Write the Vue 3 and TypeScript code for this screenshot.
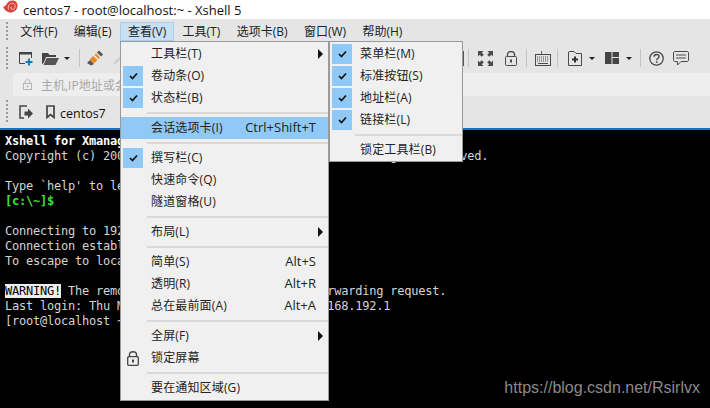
<script setup lang="ts">
interface Item {
  label?: string
  key?: string
  checked?: boolean
  active?: boolean
  arrow?: boolean
  lock?: boolean
  sep?: boolean
}

const menus: string[] = ['文件(F)', '编辑(E)', '查看(V)', '工具(T)', '选项卡(B)', '窗口(W)', '帮助(H)']

const viewItems: Item[] = [
  { label: '工具栏(T)', arrow: true },
  { label: '卷动条(O)', checked: true },
  { label: '状态栏(B)', checked: true },
  { sep: true },
  { label: '会话选项卡(I)', key: 'Ctrl+Shift+T', active: true },
  { sep: true },
  { label: '撰写栏(C)', checked: true },
  { label: '快速命令(Q)' },
  { label: '隧道窗格(U)' },
  { sep: true },
  { label: '布局(L)', arrow: true },
  { sep: true },
  { label: '简单(S)', key: 'Alt+S' },
  { label: '透明(R)', key: 'Alt+R' },
  { label: '总在最前面(A)', key: 'Alt+A' },
  { sep: true },
  { label: '全屏(F)', arrow: true },
  { label: '锁定屏幕', lock: true },
  { sep: true },
  { label: '要在通知区域(G)' }
]

const toolbarItems: Item[] = [
  { label: '菜单栏(M)', checked: true },
  { label: '标准按钮(S)', checked: true },
  { label: '地址栏(A)', checked: true },
  { label: '链接栏(L)', checked: true },
  { sep: true },
  { label: '锁定工具栏(B)' }
]
</script>

<template>
  <div class="window">
    <header class="titlebar">
      <svg class="logo" width="15" height="13" viewBox="0 0 15 13">
        <path d="M0 6.500C2 7 3 5 4 3.500 5.500 1 8 0 10.500 .5 13.500 1.200 15 3.500 14.500 6.500 14 10 11 12.500 7.500 12.500 4 12.500 1.500 10 0 6.500Z" fill="#d8443c" />
        <path d="M5.500 9.500C4.500 6 6.500 3 9.500 3.300S13 7 11 8.800 7.500 8.800 8 6.500" fill="none" stroke="#f6c4bd" stroke-width="1" />
      </svg>
      <span>centos7 - root@localhost:~ - Xshell 5</span>
    </header>

    <nav class="menubar">
      <i class="grip"></i>
      <span v-for="(m, i) in menus" :key="m" class="menu-title" :class="{ open: i === 2 }">{{ m }}</span>
    </nav>

    <div class="toolbar">
      <i class="grip"></i>
      <svg class="tb-new" width="15" height="15" viewBox="0 0 15 15">
        <path d="M7 12.500H1.500V1.500H13.500V7" fill="none" stroke="#444" stroke-width="1" />
        <rect x="1" y="1" width="13" height="2.500" fill="#444" />
        <path d="M11 7.500V14.500M7.500 11H14.500" stroke="#1a7ab8" stroke-width="2" />
      </svg>
      <svg class="tb-open" width="17" height="13" viewBox="0 0 17 13">
        <path d="M0 1H6L7.500 3H14V5H4L1.500 11L0 12Z" fill="#444" />
        <path d="M4.500 6H17L13.500 13H1.500Z" fill="#555" />
      </svg>
      <i class="caret tb-caret1"></i>
      <i class="tb-sep tb-sep1"></i>
      <svg class="tb-plug" width="18" height="16" viewBox="0 0 18 16">
        <path d="M1 13L4 10L8 14L5 15.500Z" fill="#555" />
        <path d="M3.500 9.500L10 3.500L14 7.500L8 13.500Z" fill="#e88a28" />
        <path d="M8 5.500L12 9.500" stroke="#fff" stroke-width="1.500" />
        <path d="M11 2.500L13 0.500L17 4.500L15 6.500Z" fill="#555" />
      </svg>
      <svg class="tb-plug2" width="14" height="14" viewBox="0 0 14 14">
        <path d="M1 12L10 3.500L12 5.500L3 13.500Z" fill="#cfcfcf" />
        <path d="M9.500 2L11.500 0.500L13.500 3L12 4.500Z" fill="#c4c4c4" />
      </svg>
      <span class="tb-spacer"></span>
      <i class="tb-hidden"></i>
      <i class="tb-sep"></i>
      <svg class="tb-full" width="15" height="15" viewBox="0 0 15 15" fill="#4a4a4a">
        <path d="M0 0H5.500L3.800 1.700 5.800 3.700 3.700 5.800 1.700 3.800 0 5.500Z" />
        <path d="M15 0V5.500L13.300 3.800 11.300 5.800 9.200 3.700 11.200 1.700 9.500 0Z" />
        <path d="M0 15V9.500L1.700 11.200 3.700 9.200 5.800 11.300 3.800 13.300 5.500 15Z" />
        <path d="M15 15H9.500L11.200 13.300 9.200 11.300 11.300 9.200 13.300 11.200 15 9.500Z" />
      </svg>
      <svg class="tb-lock" width="12" height="15" viewBox="0 0 12 15">
        <path d="M2.500 6V3.500C2.500 1.500 4 .5 6 .5S9.500 1.500 9.500 3.500V6" fill="none" stroke="#4a4a4a" stroke-width="1.300" />
        <rect x=".5" y="5.500" width="11" height="9" rx="1" fill="none" stroke="#4a4a4a" />
        <rect x="5" y="8.500" width="2" height="3" fill="#4a4a4a" />
      </svg>
      <i class="tb-sep tb-sep-l"></i>
      <svg class="tb-kbd" width="16" height="16" viewBox="0 0 16 16">
        <path d="M6.500 1V4" stroke="#666" />
        <rect x=".5" y="4.500" width="15" height="11" fill="none" stroke="#4a4a4a" />
        <path d="M2 7H14M2 9H14M2 11H14" stroke="#4a4a4a" stroke-dasharray="1 1" />
        <path d="M3 13.500H13" stroke="#4a4a4a" />
      </svg>
      <i class="tb-sep tb-sep-k"></i>
      <svg class="tb-add" width="14" height="15" viewBox="0 0 14 15">
        <path d="M1 .5H6L8 2.500H13.500V14.500H.5V1Z" fill="none" stroke="#4a4a4a" />
        <path d="M7 5.500V11.500M4 8.500H10" stroke="#333" stroke-width="2" />
      </svg>
      <i class="caret tb-caret2"></i>
      <svg class="tb-layout" width="14" height="12" viewBox="0 0 14 12" fill="#444">
        <rect width="6.500" height="12" />
        <rect x="7.500" width="6.500" height="5" />
        <rect x="7.500" y="6" width="6.500" height="6" />
      </svg>
      <i class="caret tb-caret3"></i>
      <i class="tb-sep tb-sep-c"></i>
      <svg class="tb-help" width="15" height="15" viewBox="0 0 15 15">
        <circle cx="7.500" cy="7.500" r="6.700" fill="none" stroke="#4a4a4a" stroke-width="1.300" />
        <path d="M5 5.800C5 4.200 6.200 3.500 7.500 3.500S10 4.300 10 5.700 7.700 7.500 7.700 9.300" fill="none" stroke="#4a4a4a" stroke-width="1.500" />
        <rect x="6.900" y="10.300" width="1.600" height="1.600" fill="#4a4a4a" />
      </svg>
      <svg class="tb-chat" width="16" height="15" viewBox="0 0 16 15">
        <path d="M2 .5H14C15 .5 15.500 1 15.500 2V9C15.500 10 15 10.500 14 10.500H8L4.500 14V10.500H2C1 10.500 .5 10 .5 9V2C.5 1 1 .5 2 .5Z" fill="none" stroke="#4a4a4a" />
        <path d="M3 4H13M3 7H13" stroke="#4a4a4a" />
      </svg>
    </div>

    <div class="addressbar">
      <div class="address-field">
        <svg width="9" height="11" viewBox="0 0 9 11">
          <path d="M2 4.500V3C2 1.500 3 .7 4.500 .7S7 1.500 7 3V4.500" fill="none" stroke="#b5b5b5" />
          <rect x=".5" y="4.500" width="8" height="6" fill="none" stroke="#b5b5b5" />
          <rect x="3.700" y="6.500" width="1.600" height="2" fill="#b5b5b5" />
        </svg>
        <span>主机,IP地址或会话名称</span>
      </div>
    </div>

    <div class="tabbar">
      <i class="grip"></i>
      <svg class="tab-link" width="14" height="14" viewBox="0 0 14 14">
        <path d="M8 1H1V13H5" fill="none" stroke="#444" stroke-width="1.500" />
        <path d="M5.500 6.500H9V3.500L14 8.500L9 13.500V10.500H5.500Z" fill="#444" />
      </svg>
      <svg class="tab-mark" width="9" height="14" viewBox="0 0 9 14">
        <path d="M1 1H8V12.500L4.500 9.500L1 12.500Z" fill="none" stroke="#444" stroke-width="1.700" />
      </svg>
      <span>centos7</span>
    </div>

    <main class="terminal">
      <div class="strong">Xshell for Xmanager Enterprise 5</div>
      <div>Copyright (c) 2002-2016 NetSarang Computer, Inc. All rights reserved.</div>
      <div>&nbsp;</div>
      <div>Type `help' to learn how to use Xshell prompt.</div>
      <div class="green">[c:\~]$</div>
      <div>&nbsp;</div>
      <div>Connecting to 192.168.192.128:22...</div>
      <div>Connection established.</div>
      <div>To escape to local shell, press 'Ctrl+Alt+]'.</div>
      <div>&nbsp;</div>
      <div><span class="inverse">WARNING!</span> The remote SSH server rejected X11 forwarding request.</div>
      <div>Last login: Thu Mar 14 10:12:55 2019 from 192.168.192.1</div>
      <div>[root@localhost ~]#</div>
      <span class="watermark">https://blog.csdn.net/Rsirlvx</span>
    </main>

    <ul class="menu view-menu">
      <template v-for="(it, i) in viewItems" :key="i">
        <li v-if="it.sep" class="sep"></li>
        <li v-else class="row" :class="{ active: it.active }">
          <span class="gutter">
            <span v-if="it.checked" class="check">
              <svg width="9" height="8" viewBox="0 0 9 8"><path d="M1 4L3.500 6.500L8 1.500" fill="none" stroke="#111" stroke-width="1.700" /></svg>
            </span>
            <svg v-if="it.lock" width="12" height="15" viewBox="0 0 12 15">
              <path d="M2.500 6V3.500C2.500 1.500 4 .7 6 .7S9.500 1.500 9.500 3.500V6" fill="none" stroke="#444" stroke-width="1.400" />
              <rect x=".7" y="5.700" width="10.600" height="8.600" rx="1" fill="none" stroke="#444" stroke-width="1.300" />
              <rect x="5" y="8.500" width="2" height="3" fill="#444" />
            </svg>
          </span>
          <span class="label">{{ it.label }}</span>
          <span v-if="it.key" class="shortcut">{{ it.key }}</span>
          <i v-if="it.arrow" class="arrow"></i>
        </li>
      </template>
    </ul>

    <ul class="menu sub-menu">
      <template v-for="(it, i) in toolbarItems" :key="i">
        <li v-if="it.sep" class="sep"></li>
        <li v-else class="row">
          <span class="gutter">
            <span v-if="it.checked" class="check">
              <svg width="9" height="8" viewBox="0 0 9 8"><path d="M1 4L3.500 6.500L8 1.500" fill="none" stroke="#111" stroke-width="1.700" /></svg>
            </span>
          </span>
          <span class="label">{{ it.label }}</span>
        </li>
      </template>
    </ul>
  </div>
</template>

<style>
html, body { margin: 0; background: #000; }
</style>

<style scoped>
.window {
  position: relative;
  width: 710px;
  height: 408px;
  overflow: hidden;
  display: flex;
  flex-direction: column;
  background: #e5e5e5;
  font: 12px "Open Sans", "Noto Sans CJK SC", sans-serif;
  color: #222;
}
.titlebar {
  height: 19px;
  flex: none;
  background: #fff;
  display: flex;
  align-items: center;
  padding-left: 3px;
  gap: 5px;
  font-size: 13px;
  color: #111;
}
.logo { flex: none; align-self: flex-start; }
.grip {
  flex: none;
  width: 2px;
  margin-left: 6px;
  background: repeating-linear-gradient(to bottom, #999 0 2px, transparent 2px 4px);
}
.menubar {
  height: 24px;
  flex: none;
  display: flex;
  align-items: center;
  font-size: 12px;
}
.menubar .grip { height: 18px; margin-right: 4px; }
.menu-title {
  height: 19px;
  line-height: 19px;
  padding: 0 8.200px;
  white-space: nowrap;
  box-sizing: border-box;
}
.menu-title.open {
  background: #c9e0f4;
  box-shadow: inset 0 0 0 1px #a9cdea;
}
.toolbar {
  height: 30px;
  flex: none;
  display: flex;
  align-items: center;
}
.toolbar .grip { height: 22px; }
.toolbar svg, .toolbar i { flex: none; }
.tb-new { margin-left: 10px; }
.tb-open { margin-left: 9px; }
.caret {
  width: 0;
  height: 0;
  border-left: 3px solid transparent;
  border-right: 3px solid transparent;
  border-top: 3px solid #222;
}
.tb-caret1 { margin-left: 5px; }
.tb-sep {
  width: 1px;
  height: 18px;
  background: #c4c4c4;
}
.tb-sep1 { margin-left: 9px; }
.tb-plug { margin-left: 6px; }
.tb-plug2 { margin-left: 8px; }
.tb-spacer { flex: 1; }
.tb-hidden {
  width: 3px;
  height: 15px;
  margin-right: 4px;
  background: #555;
}
.tb-full { margin-left: 9px; }
.tb-lock { margin-left: 12px; }
.tb-sep-l { margin-left: 9px; }
.tb-kbd { margin-left: 8px; }
.tb-sep-k { margin-left: 6px; }
.tb-add { margin-left: 10px; }
.tb-caret2 { margin-left: 7px; }
.tb-layout { margin-left: 10px; }
.tb-caret3 { margin-left: 7px; }
.tb-sep-c { margin-left: 8px; }
.tb-help { margin-left: 8px; }
.tb-chat { margin-left: 9px; margin-right: 21px; }
.addressbar {
  height: 23px;
  flex: none;
  padding-left: 13px;
  display: flex;
}
.address-field {
  flex: 1;
  background: #eeeeee;
  display: flex;
  align-items: center;
  padding-left: 10px;
  gap: 9px;
  color: #a8a8a8;
}
.tabbar {
  height: 32px;
  flex: none;
  display: flex;
  align-items: center;
}
.tabbar .grip { height: 24px; }
.tab-link { margin-left: 11px; }
.tab-mark { margin-left: 13px; }
.tabbar span { margin-left: 5px; padding-top: 2px; font-size: 12.500px; color: #111; }
.terminal {
  position: relative;
  flex: 1;
  min-height: 0;
  background: #000;
  border-top: 2px solid #0a78c8;
  padding: 4px 0 0 5px;
  font: 12px/15px "DejaVu Sans Mono", monospace;
  letter-spacing: -0.22px;
  color: #d4d4d4;
  white-space: pre;
}
.strong { font-weight: bold; color: #fff; }
.green { color: #3fe03f; font-weight: bold; }
.inverse { background: #eeeeee; color: #000; }
.watermark {
  position: absolute;
  right: 10px;
  bottom: 10px;
  font: 16px/20px "Liberation Sans", sans-serif;
  letter-spacing: 0;
  color: #8a8a8a;
}
.menu {
  position: absolute;
  top: 41px;
  margin: 0;
  padding: 1px 0;
  list-style: none;
  box-sizing: border-box;
  background: #f0f0f0;
  border: 1px solid #9a9a9a;
  font-size: 12px;
  color: #222;
}
.view-menu { left: 120px; width: 209px; height: 360px; }
.sub-menu { left: 329px; width: 134px; height: 121px; }
.row {
  height: 22px;
  padding-left: 1px;
  display: flex;
  align-items: center;
  position: relative;
}
.row.active { background: #90c8f6; }
.gutter {
  flex: none;
  width: 22px;
  height: 22px;
  display: flex;
  align-items: center;
  justify-content: center;
}
.view-menu .gutter { margin-right: 7px; }
.sub-menu .gutter { margin-right: 7px; }
.check {
  width: 20px;
  height: 20px;
  background: #90c8f6;
  display: flex;
  align-items: center;
  justify-content: center;
}
.label {
  flex: 1;
  white-space: nowrap;
  padding-bottom: 2px;
  letter-spacing: 0.150px;
}
.shortcut {
  margin-right: 12px;
  padding-bottom: 2px;
  font-size: 13px;
  white-space: nowrap;
}
.arrow {
  position: absolute;
  right: 5px;
  top: 6px;
  width: 0;
  height: 0;
  border-top: 5px solid transparent;
  border-bottom: 5px solid transparent;
  border-left: 5px solid #111;
}
.sep {
  height: 2px;
  margin: 3px 0 3px 26px;
  background: #d9d9d9;
}
.sub-menu .sep { margin-left: 25px; }
</style>
